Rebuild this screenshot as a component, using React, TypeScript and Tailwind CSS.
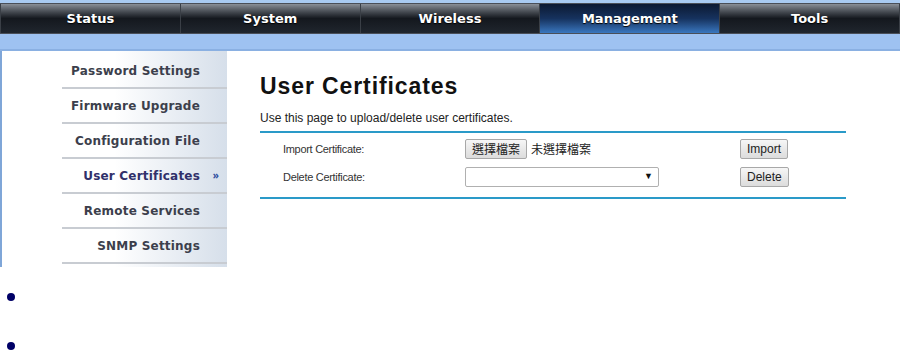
import React from 'react';

const tabs = ['Status', 'System', 'Wireless', 'Management', 'Tools'];

const menu = [
  'Password Settings',
  'Firmware Upgrade',
  'Configuration File',
  'User Certificates',
  'Remote Services',
  'SNMP Settings',
];

function NavBar() {
  return (
    <div className="flex h-[31px] bg-[#3a3f46] border-y border-[#4a4f58] px-[1px] gap-[1px]">
      {tabs.map((t) => {
        const active = t === 'Management';
        return (
          <div
            key={t}
            className={
              active
                ? 'flex-1 flex items-center justify-center text-white text-[13px] font-bold bg-gradient-to-b from-[#0c1a33] via-[#16325e] to-[#3a78c0] [text-shadow:0_1px_1px_#000]'
                : 'flex-1 flex items-center justify-center text-white text-[13px] font-bold bg-gradient-to-b from-[#8a9098] via-[#14181e] to-[#20262e] [text-shadow:0_1px_1px_#000]'
            }
            style={{ fontFamily: '"DejaVu Sans", Verdana, sans-serif' }}>
            {t}
          </div>
        );
      })}
    </div>
  );
}

function SideMenu() {
  return (
    <div className="w-[227px] border-l-2 border-[#7fa6d8] bg-gradient-to-r from-white via-white to-[#d6dfea] pt-[3px]">
      {menu.map((m) => {
        const active = m === 'User Certificates';
        return (
          <div key={m} className="ml-[60px] h-[35px] border-b-2 border-[#c8ccd2] flex items-center justify-end relative">
            <span
              className={
                active
                  ? 'text-[12px] font-bold text-[#30306a] tracking-[0.2px] mr-[27px]'
                  : 'text-[12px] font-bold text-[#3c3f4c] tracking-[0.2px] mr-[27px]'
              }
              style={{ fontFamily: '"DejaVu Sans", Verdana, sans-serif' }}>
              {m}
            </span>
            {active && (
              <span className="absolute right-[8px] text-[10px] font-bold text-[#3050a0]">»</span>
            )}
          </div>
        );
      })}
    </div>
  );
}

function Btn({ children }: { children: React.ReactNode }) {
  return (
    <div className="h-[20px] px-[6px] flex items-center border border-[#a8a8a8] rounded-[2px] bg-gradient-to-b from-[#f6f6f6] to-[#dcdcdc] text-[12px] text-[#222]">
      {children}
    </div>
  );
}

function Content() {
  return (
    <div className="flex-1 pl-[33px] pt-[21px]" style={{ fontFamily: '"Liberation Sans", Arial, sans-serif' }}>
      <h1 className="text-[23px] font-bold text-[#111] leading-[28px] tracking-[0.9px]">User Certificates</h1>
      <p className="text-[12px] text-[#222] mt-[11px] leading-[14px]">Use this page to upload/delete user certificates.</p>
      <div className="w-[586px] border-t-2 border-[#2a9ac8] mt-[6px] pt-[5px] pb-[9px] border-b-2">
        <div className="flex items-center h-[22px]">
          <span className="w-[205px] pl-[23px] text-[11px] text-[#333] tracking-[-0.3px]">Import Certificate:</span>
          <div className="w-[275px] flex items-center">
            <Btn>
              <span style={{ fontFamily: '"Noto Sans CJK TC", sans-serif' }}>選擇檔案</span>
            </Btn>
            <span className="ml-[4px] text-[12px] text-[#222]" style={{ fontFamily: '"Noto Sans CJK TC", sans-serif' }}>
              未選擇檔案
            </span>
          </div>
          <Btn>Import</Btn>
        </div>
        <div className="flex items-center h-[22px] mt-[6px]">
          <span className="w-[205px] pl-[23px] text-[11px] text-[#333] tracking-[-0.3px]">Delete Certificate:</span>
          <div className="w-[275px] flex items-center">
            <div className="w-[194px] h-[20px] border border-[#b0b0b0] rounded-[2px] bg-white flex items-center justify-end pr-[5px] text-[9px] text-[#111]">
              ▼
            </div>
          </div>
          <Btn>Delete</Btn>
        </div>
      </div>
    </div>
  );
}

export default function App() {
  return (
    <div className="w-[900px] h-[352px] bg-white overflow-hidden">
      <div className="h-[3px] bg-[#a9cbf2]" />
      <NavBar />
      <div className="h-[17px] bg-[#9ec2f1] border-b-2 border-[#8ab0e2]" />
      <div className="flex h-[216px]">
        <SideMenu />
        <Content />
      </div>
      <div className="pl-[7px] pt-[26px] flex flex-col gap-[41px]">
        <div className="w-[8px] h-[8px] rounded-full bg-[#000066]" />
        <div className="w-[8px] h-[8px] rounded-full bg-[#000066]" />
      </div>
    </div>
  );
}
